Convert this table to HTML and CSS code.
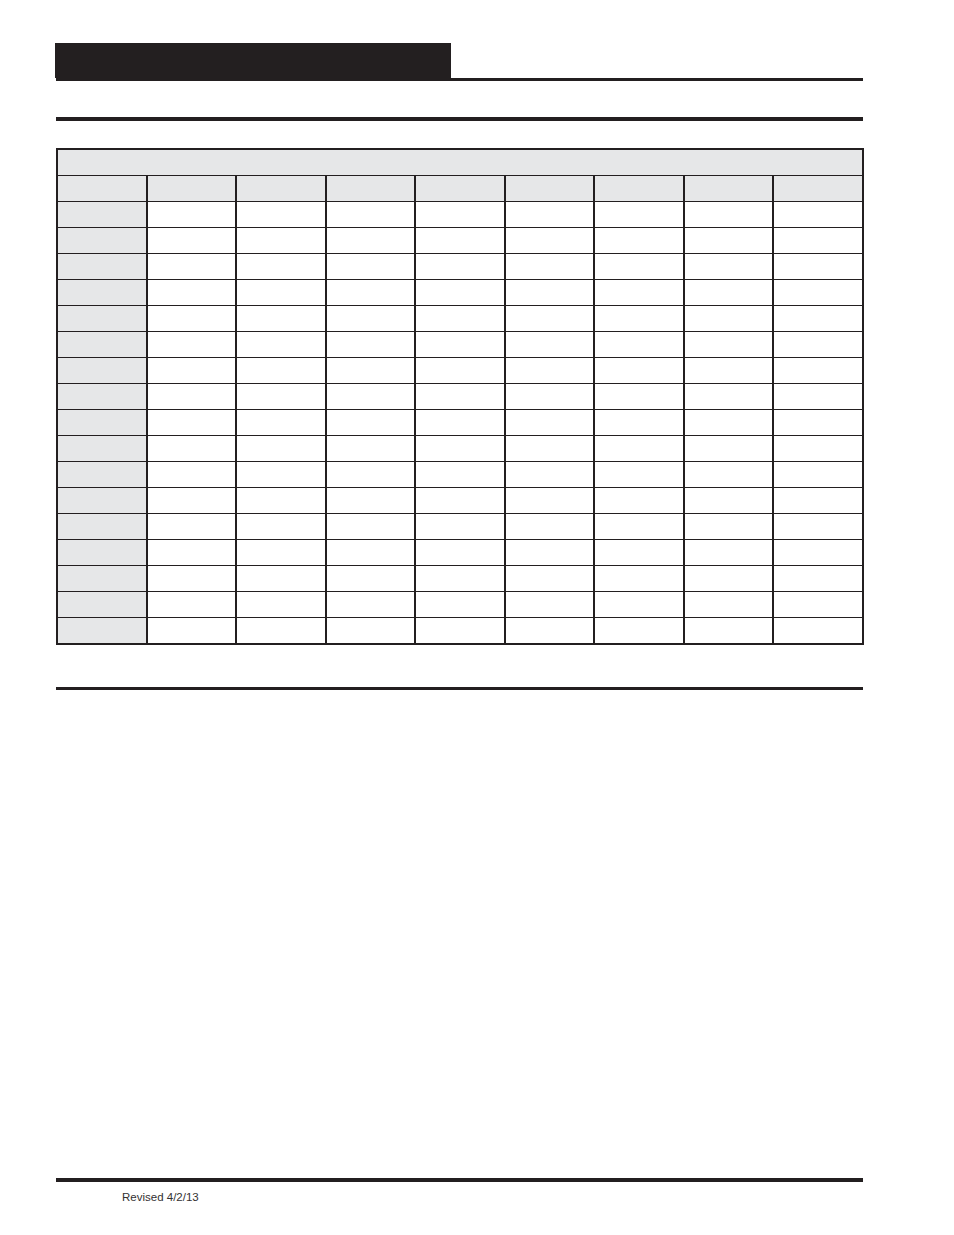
FILE: index.html
```html
<!DOCTYPE html>
<html>
<head>
<meta charset="utf-8">
<link rel="stylesheet" href="styles.css">
</head>
<body>
<div class="page">
  <header class="top">
    <div class="tab"></div>
    <div class="rule rule-thin"></div>
  </header>
  <div class="rule rule-section"></div>
  <table class="grid">
    <tr class="title"><td colspan="9"></td></tr>
    <tr class="head"><td></td><td></td><td></td><td></td><td></td><td></td><td></td><td></td><td></td></tr>
    <tr><td class="lab"></td><td></td><td></td><td></td><td></td><td></td><td></td><td></td><td></td></tr>
    <tr><td class="lab"></td><td></td><td></td><td></td><td></td><td></td><td></td><td></td><td></td></tr>
    <tr><td class="lab"></td><td></td><td></td><td></td><td></td><td></td><td></td><td></td><td></td></tr>
    <tr><td class="lab"></td><td></td><td></td><td></td><td></td><td></td><td></td><td></td><td></td></tr>
    <tr><td class="lab"></td><td></td><td></td><td></td><td></td><td></td><td></td><td></td><td></td></tr>
    <tr><td class="lab"></td><td></td><td></td><td></td><td></td><td></td><td></td><td></td><td></td></tr>
    <tr><td class="lab"></td><td></td><td></td><td></td><td></td><td></td><td></td><td></td><td></td></tr>
    <tr><td class="lab"></td><td></td><td></td><td></td><td></td><td></td><td></td><td></td><td></td></tr>
    <tr><td class="lab"></td><td></td><td></td><td></td><td></td><td></td><td></td><td></td><td></td></tr>
    <tr><td class="lab"></td><td></td><td></td><td></td><td></td><td></td><td></td><td></td><td></td></tr>
    <tr><td class="lab"></td><td></td><td></td><td></td><td></td><td></td><td></td><td></td><td></td></tr>
    <tr><td class="lab"></td><td></td><td></td><td></td><td></td><td></td><td></td><td></td><td></td></tr>
    <tr><td class="lab"></td><td></td><td></td><td></td><td></td><td></td><td></td><td></td><td></td></tr>
    <tr><td class="lab"></td><td></td><td></td><td></td><td></td><td></td><td></td><td></td><td></td></tr>
    <tr><td class="lab"></td><td></td><td></td><td></td><td></td><td></td><td></td><td></td><td></td></tr>
    <tr><td class="lab"></td><td></td><td></td><td></td><td></td><td></td><td></td><td></td><td></td></tr>
    <tr><td class="lab"></td><td></td><td></td><td></td><td></td><td></td><td></td><td></td><td></td></tr>
  </table>
  <div class="rule rule-end"></div>
  <footer class="foot">
    <div class="rule rule-foot"></div>
    <p class="revised">Revised 4/2/13</p>
  </footer>
</div>
</body>
</html>
```

FILE: styles.css
```css
html, body {
  margin: 0;
  padding: 0;
  background: #ffffff;
}
.page {
  width: 808px;
  margin-left: 55px;
  font-family: "Liberation Sans", Arial, sans-serif;
  color: #231f20;
}
.top {
  padding-top: 43px;
}
.tab {
  width: 396px;
  height: 35px;
  background: #231f20;
}
.rule {
  background: #231f20;
}
.rule-thin {
  height: 3px;
  margin-left: 1px;
}
.rule-section {
  height: 4px;
  margin-top: 36px;
  margin-left: 1px;
}
.grid {
  margin-top: 27px;
  margin-left: 1px;
  width: 808px;
  table-layout: fixed;
  border-collapse: collapse;
  border: 2px solid #231f20;
}
.grid td {
  border-left: 2px solid #231f20;
  border-right: 2px solid #231f20;
  border-top: 1.5px solid #231f20;
  border-bottom: 1.5px solid #231f20;
  padding: 0;
  height: 25px;
}
.grid .title td {
  background: #e6e7e8;
  height: 25px;
}
.grid .head td {
  background: #e6e7e8;
}
.grid td.lab {
  background: #e6e7e8;
}
.rule-end {
  height: 3px;
  margin-top: 42px;
  margin-left: 1px;
}
.foot {
  margin-top: 488px;
}
.rule-foot {
  height: 4px;
  margin-left: 1px;
}
.revised {
  margin: 8px 0 0 67px;
  font-size: 11.5px;
  line-height: 14px;
  color: #333132;
}
```
